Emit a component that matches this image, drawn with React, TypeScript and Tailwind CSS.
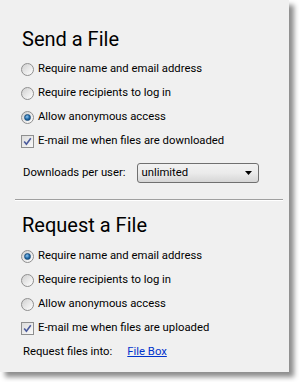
import React from 'react';

// Win7-style radio button
const Radio: React.FC<{ checked?: boolean }> = ({ checked }) => (
  <span className="relative flex h-[13px] w-[13px] shrink-0 items-center justify-center rounded-full border border-[#8f8f8f] bg-gradient-to-br from-[#cfcfcf] via-[#e8e8e8] to-[#ffffff]">
    {checked && (
      <span className="h-[7px] w-[7px] rounded-full border border-[#1c4f7d] bg-[radial-gradient(circle_at_40%_35%,#8ec4f0,#1f6aa8_55%,#0d3f70)]" />
    )}
  </span>
);

const Checkbox: React.FC = () => (
  <span className="flex h-[13px] w-[13px] shrink-0 items-center justify-center border border-[#8e8f8f] bg-gradient-to-br from-[#dcdcdc] to-[#fafafa]">
    <svg width="9" height="9" viewBox="0 0 9 9">
      <path d="M1.2 4.6 L3.4 7.2 L7.8 1.2" fill="none" stroke="#4a5a9c" strokeWidth="1.6" />
    </svg>
  </span>
);

const Option: React.FC<{ label: string; checked?: boolean }> = ({ label, checked }) => (
  <div className="flex h-[24px] items-center gap-[4px] pl-[21px]">
    <Radio checked={checked} />
    <span>{label}</span>
  </div>
);

const CheckRow: React.FC<{ label: string }> = ({ label }) => (
  <div className="flex h-[24px] items-center gap-[4px] pl-[21px]">
    <Checkbox />
    <span>{label}</span>
  </div>
);

export default function App() {
  return (
    <div className="h-[382px] w-[299px] bg-white">
      <div
        className="flex h-[372px] w-[289px] flex-col bg-[#f0f0f0] pt-[27px] text-[11.3px] leading-[16px] text-black shadow-[5px_5px_5px_rgba(0,0,0,0.45)]"
        style={{ fontFamily: 'Roboto, "Liberation Sans", sans-serif' }}
      >
        {/* Send */}
        <h2 className="h-[24px] pl-[22px] text-[20px] leading-[24px] font-normal">Send a File</h2>
        <div className="mt-[6px] flex flex-col">
          <Option label="Require name and email address" />
          <Option label="Require recipients to log in" />
          <Option label="Allow anonymous access" checked />
          <CheckRow label="E-mail me when files are downloaded" />
        </div>
        <div className="mt-[8px] flex h-[24px] items-center pl-[23px]">
          <span>Downloads per user:</span>
          <div className="ml-[11px] flex h-[20px] w-[122px] items-center justify-between rounded-[3px] border border-[#707070] bg-gradient-to-b from-[#f2f2f2] via-[#ebebeb] to-[#d6d6d6] pr-[6px] pl-[4px]">
            <span>unlimited</span>
            <svg width="7" height="4" viewBox="0 0 7 4">
              <path d="M0 0 H7 L3.5 4 Z" fill="#000" />
            </svg>
          </div>
        </div>

        <div className="mx-[15px] mt-[14px] w-[268px] border-t border-b border-t-[#a0a0a0] border-b-white" />

        {/* Request */}
        <h2 className="mt-[12px] h-[24px] pl-[22px] text-[20px] leading-[24px] font-normal">Request a File</h2>
        <div className="mt-[7px] flex flex-col">
          <Option label="Require name and email address" checked />
          <Option label="Require recipients to log in" />
          <Option label="Allow anonymous access" />
          <CheckRow label="E-mail me when files are uploaded" />
        </div>
        <div className="flex h-[24px] items-center pl-[23px]">
          <span>Request files into:</span>
          <a href="#" className="ml-[15px] text-[#0033cc] underline">
            File Box
          </a>
        </div>
      </div>
    </div>
  );
}
